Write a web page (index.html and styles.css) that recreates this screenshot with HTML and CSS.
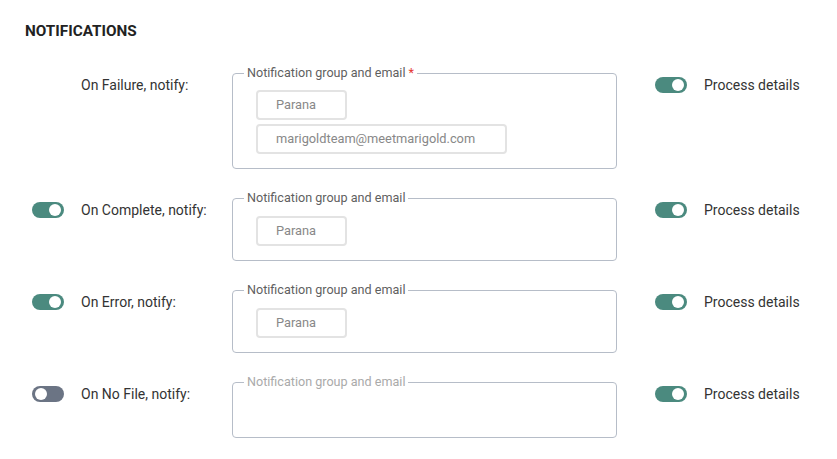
FILE: index.html
```html
<!DOCTYPE html>
<html>
<head>
<meta charset="utf-8">
<link rel="stylesheet" href="styles.css">
</head>
<body>
<div class="page">
  <h2 class="title">NOTIFICATIONS</h2>
  <div class="rows">
    <div class="row">
      <div class="toggle-cell"></div>
      <div class="label">On Failure, notify:</div>
      <fieldset class="box">
        <legend>Notification group and email <span class="req">*</span></legend>
        <div class="chips">
          <div class="chip chip-short">Parana</div>
          <div class="chip">marigoldteam@meetmarigold.com</div>
        </div>
      </fieldset>
      <div class="side"><span class="toggle on"></span><span class="side-label">Process details</span></div>
    </div>
    <div class="row">
      <div class="toggle-cell"><span class="toggle on"></span></div>
      <div class="label">On Complete, notify:</div>
      <fieldset class="box">
        <legend>Notification group and email</legend>
        <div class="chips single">
          <div class="chip chip-short">Parana</div>
        </div>
      </fieldset>
      <div class="side"><span class="toggle on"></span><span class="side-label">Process details</span></div>
    </div>
    <div class="row">
      <div class="toggle-cell"><span class="toggle on"></span></div>
      <div class="label">On Error, notify:</div>
      <fieldset class="box">
        <legend>Notification group and email</legend>
        <div class="chips single">
          <div class="chip chip-short">Parana</div>
        </div>
      </fieldset>
      <div class="side"><span class="toggle on"></span><span class="side-label">Process details</span></div>
    </div>
    <div class="row">
      <div class="toggle-cell"><span class="toggle off"></span></div>
      <div class="label">On No File, notify:</div>
      <fieldset class="box disabled">
        <legend>Notification group and email</legend>
        <div class="chips"></div>
      </fieldset>
      <div class="side"><span class="toggle on"></span><span class="side-label">Process details</span></div>
    </div>
  </div>
</div>
</body>
</html>
```
FILE: styles.css
```css
* { box-sizing: border-box; }
html, body { margin: 0; padding: 0; background: #fff; }
body {
  font-family: Roboto, "Liberation Sans", Arial, sans-serif;
  color: #333;
}
.page {
  padding: 21px 0 0 25px;
}
.title {
  margin: 0;
  font-size: 15.3px;
  line-height: 20px;
  font-weight: 700;
  color: #222;
}
.rows {
  margin-top: 25px;
  display: flex;
  flex-direction: column;
  gap: 22px;
}
.row {
  display: grid;
  grid-template-columns: 56px 151px 385px auto;
  align-items: start;
}
.toggle-cell {
  padding-left: 7px;
  padding-top: 11px;
  height: 27px;
}
.label {
  font-size: 14px;
  line-height: 20px;
  padding-top: 9px;
  color: #333;
}
.box {
  margin: 0;
  padding: 10px 0 14px 23px;
  border: 1px solid #b6bdc8;
  border-radius: 4px;
  min-width: 0;
}
.box legend {
  font-size: 12.6px;
  line-height: 14px;
  color: #5f5f5f;
  padding: 0 3px;
  margin-left: -12px;
}
.box.disabled legend { color: #aaa; }
.req { color: #e53935; }
.chips {
  display: flex;
  flex-direction: column;
  align-items: flex-start;
  gap: 4px;
  min-height: 24px;
}
.chips.single { padding: 1px 0 0; }
.chip {
  height: 30px;
  border: 2px solid #e3e3e3;
  border-radius: 4px;
  font-size: 12.8px;
  line-height: 26px;
  color: #888;
  padding: 0 30px 0 18px;
}
.chip-short { width: 91px; }
.side {
  display: flex;
  align-items: center;
  padding-top: 9px;
  margin-left: 38px;
  gap: 17px;
}
.side-label {
  font-size: 14px;
  line-height: 20px;
  color: #333;
  white-space: nowrap;
}
.toggle {
  position: relative;
  display: inline-block;
  width: 32px;
  height: 16px;
  border-radius: 8px;
  background: #4b8a7f;
  flex: none;
}
.toggle::after {
  content: "";
  position: absolute;
  top: 2px;
  width: 12px;
  height: 12px;
  border-radius: 50%;
  background: #fff;
}
.toggle.on::after { right: 3px; }
.toggle.off { background: #6b7484; }
.toggle.off::after { left: 3px; }
```
